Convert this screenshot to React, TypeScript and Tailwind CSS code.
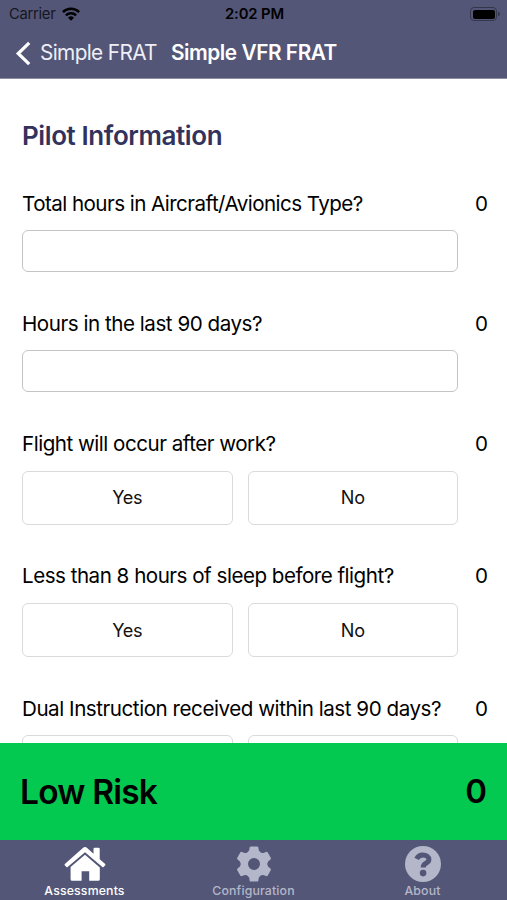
import type { ReactNode } from "react";

type Question = {
  label: string;
  tracking: string;
  kind: "number" | "choice";
};

const questions: Question[] = [
  { label: "Total hours in Aircraft/Avionics Type?", tracking: "tracking-[-0.55px]", kind: "number" },
  { label: "Hours in the last 90 days?", tracking: "tracking-[-0.47px]", kind: "number" },
  { label: "Flight will occur after work?", tracking: "tracking-[-0.5px]", kind: "choice" },
  { label: "Less than 8 hours of sleep before flight?", tracking: "tracking-[-0.5px]", kind: "choice" },
  { label: "Dual Instruction received within last 90 days?", tracking: "tracking-[-0.46px]", kind: "choice" },
];

const toothAngles = [0, 60, 120, 180, 240, 300];

function HomeIcon() {
  return (
    <svg width="42" height="34" viewBox="0 0 42 34" fill="currentColor">
      <path d="M.8 17 18.9 1a3.1 3.1 0 0 1 4.2 0l6.4 5.7V2q0-1.2 1.2-1.2h3.8q1.2 0 1.2 1.2v10.2l5.5 4.8q.5.6 0 1.2l-1.6 1.9q-.6.5-1.2 0L21 5.2 3.6 20.1q-.6.5-1.2 0L.8 18.2q-.5-.6 0-1.2z" />
      <path d="M21 7.8 35.8 20.5v11.8q0 1.5-1.5 1.5h-9.1V24.2h-7.6v9.6H8.1q-1.5 0-1.5-1.5V20.1z" />
    </svg>
  );
}

function GearIcon() {
  return (
    <svg width="36" height="36" viewBox="-18 -18 36 36" fill="currentColor">
      {toothAngles.map((angle) => (
        <path
          key={angle}
          transform={`rotate(${angle})`}
          d="M-6.2-12Q-4.9-13-4.7-14.2L-4.4-16.4Q-4.2-17.6-3-17.6H3Q4.2-17.6 4.4-16.4L4.7-14.2Q4.9-13 6.2-12z"
        />
      ))}
      <circle r="9.7" fill="none" stroke="currentColor" strokeWidth="7.4" />
    </svg>
  );
}

function HelpIcon() {
  return (
    <svg width="36" height="36" viewBox="0 0 36 36">
      <circle cx="18" cy="18" r="18" fill="currentColor" />
      <path
        d="M11.6 12.8c1.4-2.7 3.4-3.9 6.2-3.9 3.5 0 6.1 1.8 6.1 4.6 0 4.1-5.7 3.4-5.7 7.9"
        fill="none"
        stroke="#535677"
        strokeWidth="5"
      />
      <circle cx="18.1" cy="27.1" r="3.3" fill="#535677" />
    </svg>
  );
}

function WifiIcon() {
  return (
    <svg width="18" height="14" viewBox="0 0 18 14" fill="none" stroke="#000" strokeWidth="2.5">
      <path d="M.9 5.1a11.6 11.6 0 0 1 16.2 0" />
      <path d="M3.9 8.3a7.3 7.3 0 0 1 10.2 0" />
      <path d="M9 13.7 6 10.7a4.3 4.3 0 0 1 6 0z" fill="#000" stroke="none" />
    </svg>
  );
}

function Choice({ children }: { children: ReactNode }) {
  return (
    <button className="h-[54px] flex-1 rounded-[6px] border-[1.5px] border-[#dadada] pt-[1px] text-[18.1px] tracking-[-0.3px] text-[#111]">
      {children}
    </button>
  );
}

function QuestionRow({ question }: { question: Question }) {
  const choice = question.kind === "choice";
  return (
    <div className={choice ? "h-[132.4px] shrink-0" : "h-[120.25px] shrink-0"}>
      <div className="flex h-[30px] items-center justify-between pr-[19px] text-[20.6px] text-black">
        <span className={`whitespace-nowrap ${question.tracking}`}>{question.label}</span>
        <span>0</span>
      </div>
      {choice ? (
        <div className="mt-[11px] mr-[49px] flex gap-[15px]">
          <Choice>Yes</Choice>
          <Choice>No</Choice>
        </div>
      ) : (
        <div className="mt-[11px] mr-[49px] h-[42px] rounded-[6px] border-[1.5px] border-[#c4c4c4]" />
      )}
    </div>
  );
}

function Tab({ icon, label, active }: { icon: ReactNode; label: string; active?: boolean }) {
  return (
    <div className={`flex flex-1 flex-col items-center pt-[5px] ${active ? "text-white" : "text-[#b4b6c9]"}`}>
      <div className="flex h-[37px] items-center">{icon}</div>
      <span className="mt-[1px] text-[12.3px] leading-4 font-medium tracking-[0.15px]">{label}</span>
    </div>
  );
}

export default function App() {
  return (
    <div className="flex h-[900px] w-[507px] flex-col overflow-hidden bg-white font-[Inter,sans-serif]">
      {/* Status bar and navigation */}
      <header className="h-[79px] shrink-0 border-b border-[#8b8da6] bg-[#535677]">
        <div className="grid h-[28px] grid-cols-3 items-center pr-[7px] pl-[9px] text-[14.8px] text-black">
          <div className="flex items-center gap-[7px]">
            <span className="tracking-[-0.3px] text-[#17171f]">Carrier</span>
            <WifiIcon />
          </div>
          <span className="text-center font-semibold tracking-[-0.1px]">2:02 PM</span>
          <div className="flex items-center justify-end gap-px">
            <div className="rounded-[4px] border border-[#34364c] p-[1.5px]">
              <div className="h-[9px] w-[22px] rounded-[2px] bg-black" />
            </div>
            <div className="h-1 w-[2px] rounded-r bg-[#34364c]" />
          </div>
        </div>
        <div className="flex h-[50px] items-center pl-[15px] text-[20.8px] text-white">
          <svg width="17" height="25" viewBox="0 0 17 25" fill="none" stroke="currentColor" strokeWidth="3.2">
            <path d="M14.2 1.8 3.2 12.5l11 10.7" />
          </svg>
          <span className="ml-2 w-[131px] tracking-[-0.65px] whitespace-nowrap text-[#eeeef5]">Simple FRAT</span>
          <span className="font-semibold tracking-[-0.45px] whitespace-nowrap">Simple VFR FRAT</span>
        </div>
      </header>

      <main className="flex min-h-0 flex-1 flex-col overflow-hidden pl-[22px]">
        <h1 className="mt-[37px] mb-[33px] text-[26px] leading-10 font-semibold tracking-[-0.4px] text-[#32325d]">
          Pilot Information
        </h1>
        {questions.map((q) => (
          <QuestionRow key={q.label} question={q} />
        ))}
      </main>

      {/* Running risk score */}
      <div className="flex h-[97px] shrink-0 items-center justify-between bg-[#04c951] pt-[1px] pr-5 pl-5 text-[33.5px] font-semibold text-black">
        <span className="tracking-[-0.8px]">Low Risk</span>
        <span className="text-[33px]">0</span>
      </div>

      <nav className="flex h-[60px] shrink-0 bg-[#535677]">
        <Tab icon={<HomeIcon />} label="Assessments" active />
        <Tab icon={<GearIcon />} label="Configuration" />
        <Tab icon={<HelpIcon />} label="About" />
      </nav>
    </div>
  );
}
